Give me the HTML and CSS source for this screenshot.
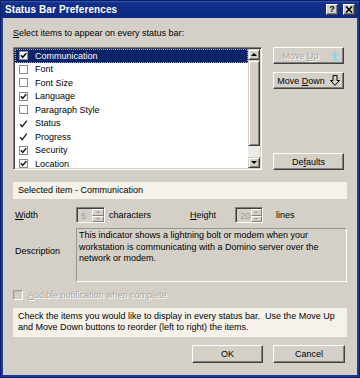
FILE: index.html
```html
<!DOCTYPE html>
<html>
<head>
<meta charset="utf-8">
<title>Status Bar Preferences</title>
<link rel="stylesheet" href="styles.css">
</head>
<body>
<div class="window">
  <div class="titlebar">
    <span class="title">Status Bar Preferences</span>
    <div class="tbtns">
      <span class="tbtn help">?</span>
      <span class="tbtn close"><svg width="8" height="7" viewBox="0 0 8 7"><path d="M1 0.5 L7 6.5 M7 0.5 L1 6.5" stroke="#000" stroke-width="1.6" fill="none"/></svg></span>
    </div>
  </div>
  <div class="body">
    <div class="toplabel"><u>S</u>elect items to appear on every status bar:</div>
    <div class="listrow">
      <div class="listbox">
        <div class="items">
          <div class="item sel"><span class="cb"><svg width="7" height="7" viewBox="0 0 7 7"><path d="M0.8 3.3 L2.7 5.3 L6.3 1.2" stroke="#000" stroke-width="1.5" fill="none"/></svg></span><span class="itext">Communication</span></div>
          <div class="item"><span class="cb"></span><span class="itext">Font</span></div>
          <div class="item"><span class="cb"></span><span class="itext">Font Size</span></div>
          <div class="item"><span class="cb"><svg width="7" height="7" viewBox="0 0 7 7"><path d="M0.8 3.3 L2.7 5.3 L6.3 1.2" stroke="#222" stroke-width="1.5" fill="none"/></svg></span><span class="itext">Language</span></div>
          <div class="item"><span class="cb"></span><span class="itext">Paragraph Style</span></div>
          <div class="item"><span class="ck"><svg width="9" height="9" viewBox="0 0 9 9"><path d="M1.2 5.2 L3.2 7.6 L7.8 1.6" stroke="#222" stroke-width="1.4" fill="none"/></svg></span><span class="itext">Status</span></div>
          <div class="item"><span class="ck"><svg width="9" height="9" viewBox="0 0 9 9"><path d="M1.2 5.2 L3.2 7.6 L7.8 1.6" stroke="#222" stroke-width="1.4" fill="none"/></svg></span><span class="itext">Progress</span></div>
          <div class="item"><span class="cb"><svg width="7" height="7" viewBox="0 0 7 7"><path d="M0.8 3.3 L2.7 5.3 L6.3 1.2" stroke="#222" stroke-width="1.5" fill="none"/></svg></span><span class="itext">Security</span></div>
          <div class="item"><span class="cb"><svg width="7" height="7" viewBox="0 0 7 7"><path d="M0.8 3.3 L2.7 5.3 L6.3 1.2" stroke="#222" stroke-width="1.5" fill="none"/></svg></span><span class="itext">Location</span></div>
        </div>
        <div class="vscroll">
          <div class="sbtn"><span class="tri-up"></span></div>
          <div class="thumb"></div>
          <div class="track"></div>
          <div class="sbtn"><span class="tri-down"></span></div>
        </div>
      </div>
      <div class="sidebtns">
        <div class="btn disabled moveup"><span>Move <u>U</u>p</span><svg width="8" height="10" viewBox="0 0 8 10"><path d="M4 0.3 L7.8 4.6 H5.6 V9.8 H2.4 V4.6 H0.2 Z" fill="#8fd6ea"/></svg></div>
        <div class="btn movedown"><span>Move <u>D</u>own</span><svg width="10" height="11" viewBox="0 0 10 11"><path d="M3 0.5 H7 V5.5 H9.5 L5 10.3 L0.5 5.5 H3 Z" fill="none" stroke="#000" stroke-width="1"/></svg></div>
        <div class="btn defaults"><span>De<u>f</u>aults</span></div>
      </div>
    </div>
    <div class="note selected">Selected item - Communication</div>
    <div class="formrow">
      <span class="flabel"><u>W</u>idth</span>
      <div class="spin w29"><span class="sval">5</span><span class="sbtns"><span class="shalf"><span class="stri-up"></span></span><span class="shalf"><span class="stri-down"></span></span></span></div>
      <span class="unit chars">characters</span>
      <span class="hlabel"><u>H</u>eight</span>
      <div class="spin w28"><span class="sval">20</span><span class="sbtns"><span class="shalf"><span class="stri-up"></span></span><span class="shalf"><span class="stri-down"></span></span></span></div>
      <span class="unit lines">lines</span>
    </div>
    <div class="descrow">
      <span class="flabel dlabel">Description</span>
      <div class="descbox">This indicator shows a lightning bolt or modem when your<br>workstation is communicating with a Domino server over the<br>network or modem.</div>
    </div>
    <div class="audible">
      <span class="dcb"></span>
      <span class="dtext"><u>A</u>udible notification when complete</span>
    </div>
    <div class="note info">Check the items you would like to display in every status bar.&nbsp; Use the Move Up<br>and Move Down buttons to reorder (left to right) the items.</div>
    <div class="okrow">
      <div class="btn okbtn"><span>OK</span></div>
      <div class="btn cancelbtn"><span>Cancel</span></div>
    </div>
  </div>
</div>
</body>
</html>
```
FILE: styles.css
```css
* { box-sizing: border-box; }
html, body { margin: 0; padding: 0; }
body {
  width: 360px;
  height: 378px;
  overflow: hidden;
  font-family: "Liberation Sans", Arial, sans-serif;
  font-size: 9px;
  color: #000;
  background: #ffffff;
}
u { text-decoration: underline; text-underline-offset: 1px; }

.window {
  width: 360px;
  height: 378px;
  background: #1c3c9c;
  border: 1px solid #0b1f66;
  padding: 0 2px 2px 2px;
  display: flex;
  flex-direction: column;
}

.titlebar {
  height: 17px;
  margin: 0 -2px;
  padding: 0 4px 0 4px;
  display: flex;
  align-items: center;
  justify-content: space-between;
  background: linear-gradient(#3656b0 0, #10308c 2px, #0c2a80 100%);
}
.title {
  color: #fff;
  font-weight: bold;
  font-size: 10px;
  letter-spacing: 0.1px;
  line-height: 17px;
}
.tbtns { display: flex; gap: 5px; }
.tbtn {
  width: 12px;
  height: 11px;
  background: #d4d0c8;
  border: 1px solid;
  border-color: #fff #404040 #404040 #fff;
  box-shadow: inset -1px -1px #808080;
  display: flex;
  align-items: center;
  justify-content: center;
  font-weight: bold;
  font-size: 9px;
  line-height: 9px;
}

.body {
  flex: 1;
  background: #d4d0c8;
  padding: 9px 10px 0 10px;
  display: flex;
  flex-direction: column;
}

.toplabel { height: 13px; line-height: 13px; margin-bottom: 7px; }

.listrow { display: flex; gap: 11px; height: 123px; }

.listbox {
  width: 249px;
  height: 123px;
  background: #fff;
  border: 1px solid;
  border-color: #808080 #fff #fff #808080;
  box-shadow: inset 1px 1px #404040, inset -1px -1px #d4d0c8;
  padding: 1px;
  display: flex;
}
.items { flex: 1; overflow: hidden; }
.item {
  height: 13.5px;
  display: flex;
  align-items: center;
  padding-left: 4px;
}
.item.sel {
  background: #0a246a;
  color: #fff;
  outline: 1px dotted #9aa4c8;
  outline-offset: -1px;
}
.cb {
  width: 9px;
  height: 9px;
  border: 1px solid #8a8a8a;
  background: #fff;
  display: flex;
  align-items: center;
  justify-content: center;
  flex: none;
}
.ck {
  width: 9px;
  height: 9px;
  display: flex;
  align-items: center;
  justify-content: center;
  flex: none;
}
.itext { margin-left: 7px; white-space: nowrap; }

.vscroll {
  width: 12px;
  display: flex;
  flex-direction: column;
  background: #ecebe8;
}
.sbtn {
  height: 11px;
  background: #d4d0c8;
  border: 1px solid;
  border-color: #d4d0c8 #404040 #404040 #d4d0c8;
  box-shadow: inset 1px 1px #fff, inset -1px -1px #808080;
  display: flex;
  align-items: center;
  justify-content: center;
}
.thumb {
  height: 86px;
  background: #d4d0c8;
  border: 1px solid;
  border-color: #d4d0c8 #404040 #404040 #d4d0c8;
  box-shadow: inset 1px 1px #fff, inset -1px -1px #808080;
}
.track { flex: 1; }
.tri-up { width: 0; height: 0; border-left: 3px solid transparent; border-right: 3px solid transparent; border-bottom: 3px solid #000; }
.tri-down { width: 0; height: 0; border-left: 3px solid transparent; border-right: 3px solid transparent; border-top: 3px solid #000; }

.sidebtns {
  width: 71px;
  display: flex;
  flex-direction: column;
}
.btn {
  height: 17px;
  background: #d4d0c8;
  border: 1px solid;
  border-color: #fff #404040 #404040 #fff;
  box-shadow: inset -1px -1px #808080;
  display: flex;
  align-items: center;
  justify-content: center;
  white-space: nowrap;
}
.btn.disabled { color: #a9a69e; text-shadow: 1px 1px 0 #fff; }
.moveup { gap: 12px; padding-left: 4px; }
.movedown { gap: 5px; margin-top: 8px; }
.defaults { margin-top: auto; }

.note {
  background: #f6f2e9;
  padding-left: 5px;
}
.selected { margin-top: 12px; height: 17px; line-height: 17px; }

.formrow {
  margin-top: 8px;
  height: 16px;
  display: flex;
  align-items: center;
}
.flabel { width: 63px; padding-left: 2px; flex: none; }
.spin {
  height: 16px;
  background: #d4d0c8;
  border: 1px solid;
  border-color: #808080 #fff #fff #808080;
  box-shadow: inset 1px 1px #404040;
  display: flex;
  padding: 1px 0 0 1px;
  flex: none;
}
.w29 { width: 29px; }
.w28 { width: 28px; }
.sval { flex: 1; color: #a09d96; padding-left: 3px; line-height: 13px; font-size: 9.5px; }
.sbtns { width: 12px; display: flex; flex-direction: column; }
.shalf {
  flex: 1;
  background: #d4d0c8;
  border: 1px solid;
  border-color: #fff #808080 #808080 #fff;
  display: flex;
  align-items: center;
  justify-content: center;
}
.stri-up { width: 0; height: 0; border-left: 2px solid transparent; border-right: 2px solid transparent; border-bottom: 2px solid #a09d96; }
.stri-down { width: 0; height: 0; border-left: 2px solid transparent; border-right: 2px solid transparent; border-top: 2px solid #a09d96; }
.chars { margin-left: 4px; width: 81px; }
.hlabel { width: 45px; flex: none; }
.lines { margin-left: 13px; }

.descrow {
  margin-top: 5px;
  height: 54px;
  display: flex;
}
.dlabel { padding-top: 17px; line-height: 13px; }
.descbox {
  flex: 1;
  border: 1px solid;
  border-color: #9a978f #fff #fff #9a978f;
  padding: 1px 2px;
  line-height: 11.5px;
}

.audible {
  margin-top: 7px;
  height: 11px;
  display: flex;
  align-items: center;
}
.dcb {
  width: 10px;
  height: 10px;
  background: #d4d0c8;
  border: 1px solid;
  border-color: #a09d96 #fff #fff #a09d96;
  box-shadow: inset 1px 1px #c0bdb6;
  flex: none;
}
.dtext { margin-left: 5px; color: #aaa79f; text-shadow: 1px 1px 0 #fff; }

.info {
  margin-top: 8px;
  height: 29px;
  padding-top: 3px;
  line-height: 11px;
}

.okrow {
  margin-top: 8px;
  height: 18px;
  display: flex;
  justify-content: flex-end;
  gap: 10px;
  padding-right: 2px;
}
.okrow .btn { height: 18px; }
.okbtn { width: 71px; }
.cancelbtn { width: 72px; }
```
